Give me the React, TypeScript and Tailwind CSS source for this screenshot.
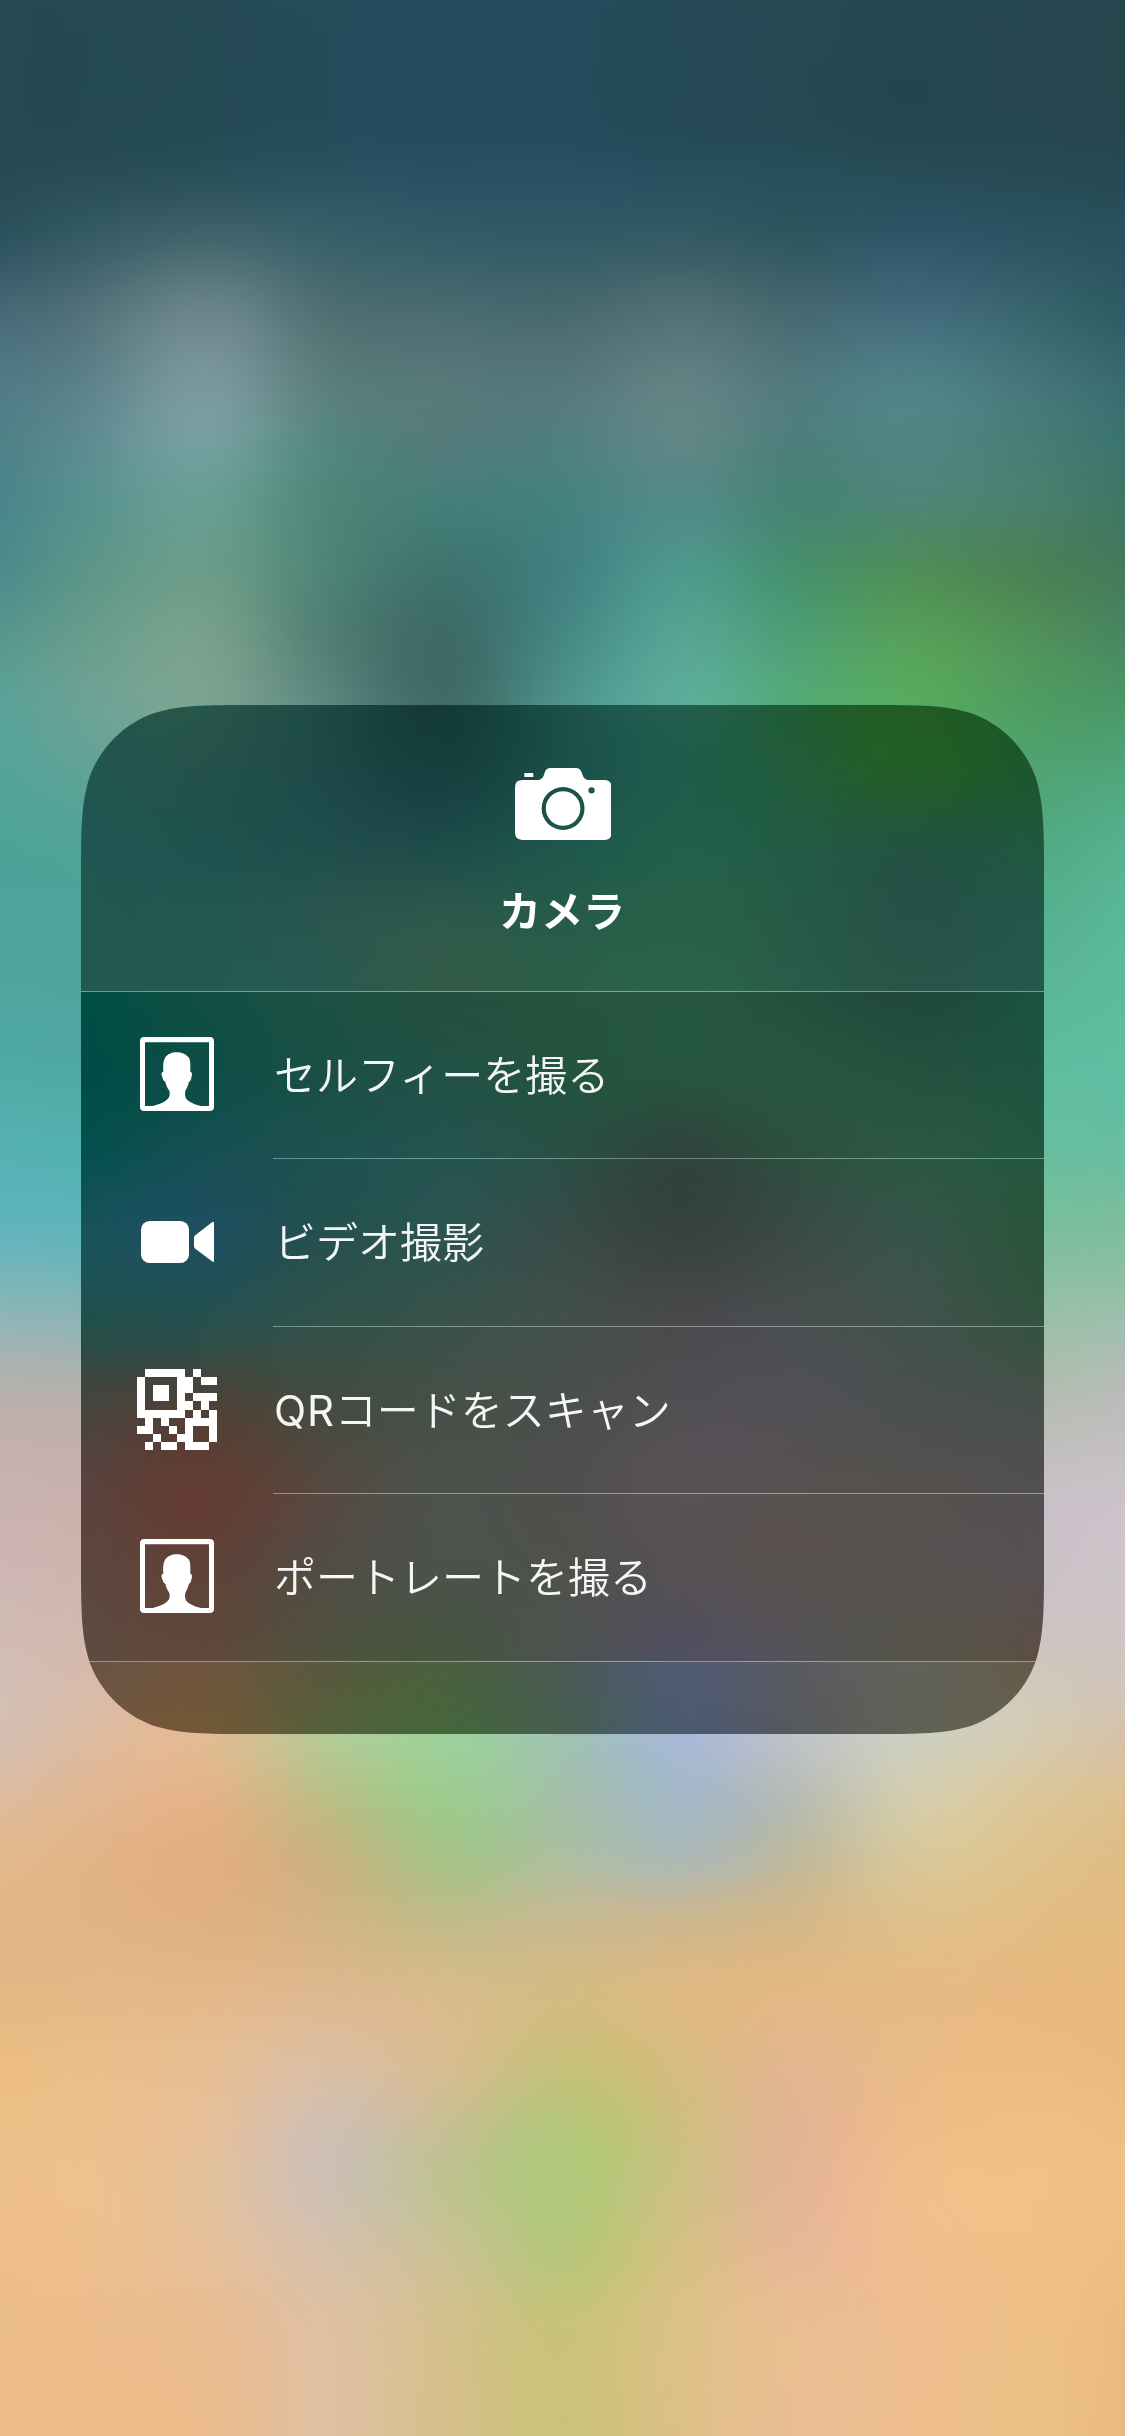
import type { ReactNode } from 'react'

type MeshRow = { y: number; colors: string }
type Mesh = { xs: number[]; rows: MeshRow[] }

const WALLPAPER: Mesh = {
  xs: [0, 76, 207, 325, 445, 562, 682, 792, 912, 1040, 1125],
  rows: [
    { y: 0, colors: '264852 244952 254a54 264c5c 264c5e 264c5e 254a56 264953 24464f 264750 26464e' },
    { y: 130, colors: '264852 244952 254b55 264c5c 264c5e 264c5e 254a57 254a54 24474f 264750 26464f' },
    { y: 180, colors: '284c55 294e57 2b515b 2d5362 2b5264 2a5265 2a5160 28505c 284e59 274c56 264a54' },
    { y: 240, colors: '2c525e 355b64 43666d 39616a 345c67 315b66 355b65 30575f 30576a 2c5462 2a525d' },
    { y: 310, colors: '456a76 506f78 6b868b 4f6f72 4a6c71 47696e 527074 456970 436a7c 38646c 2f5b63' },
    { y: 390, colors: '517b87 5a8289 7b9a9f 5c7f7f 587a7b 56797c 638385 527b7f 518488 46767a 396c70' },
    { y: 440, colors: '4f8087 5c8a8f 77a0a1 54877f 557b7b 517f82 618786 4e7f7c 508584 487b75 3a736f' },
    { y: 500, colors: '49858a 56908e 699e94 4e8679 467f7a 45827f 538a89 478374 4e8578 4a7f6d 3e7564' },
    { y: 570, colors: '4b8b8c 5b9489 6c9c89 4f8477 3f736e 418180 4f998d 46916f 4f8e58 4b8055 457a5c' },
    { y: 640, colors: '57988f 669c8d 78a18d 527f74 3f6a66 468884 58a594 4f9f76 57a15b 50915b 488762' },
    { y: 705, colors: '59a299 6ba296 7ba392 5c8880 426b67 4f938a 5dad9b 54aa78 57ab5f 4f9c63 4b9768' },
    { y: 850, colors: '4ea398 50a398 5aa095 5a9a90 5a9a90 5a9a90 5aa590 55aa80 55ad75 52ab85 57b290' },
    { y: 1050, colors: '50a8a4 50a7a2 50a7a0 50a7a0 50a7a0 50a7a0 50a7a0 58b298 5cb89a 60bb9e 60bda0' },
    { y: 1130, colors: '55b0b0 54afae 53aeae 53aeae 53aeae 53aeae 53aeae 60b89c 60b89c 65bea0 65bda2' },
    { y: 1230, colors: '62b4bd 60b4bb 5cb0bd 5cb0bd 5cb0bd 5cb0bd 70b0a0 78b89c 78b89c 7bbf9c 7fbd9f' },
    { y: 1330, colors: '97b5b5 94b4b4 90b0b0 90b0b0 90b0b0 90b0b0 95b5a5 9ab8a8 9abaaa 9dc0a8 a3beb0' },
    { y: 1400, colors: 'bab0ad b9b0ac b8aeaa b8aeaa b8aeaa b8aeaa b8b0b0 b5b8b0 b5b8b0 b5bdb2 bbbcba' },
    { y: 1500, colors: 'c9b3b0 cab2ad cbaea8 cbaea8 cbaea8 cbaea8 c8b5b8 c8c0c4 c8c0c4 c9c1c7 cbc3c9' },
    { y: 1600, colors: 'cfb9b4 d0b7b0 d0b5ad d0b5ad c0c0b0 c0c0b8 bcc0d0 c8c0c4 cac3c4 cbc3c5 ccc4c7' },
    { y: 1700, colors: 'd3bfb4 d8bcaa dfb99a b8c8a0 a5d0a0 a5c4b8 aabad8 c0c2cb cccdc4 d2cab8 d2c3b6' },
    { y: 1740, colors: 'd4beb2 dcbba2 e2bb92 b5ca98 9fd19b a0c2b2 a8b9d6 bfc2c8 cdcfc0 d5cab0 d6c1a7' },
    { y: 1800, colors: 'dfbb9d e0b894 e4b387 bcbd85 9dcb8e a5c0a8 a4b8c6 b6bbb2 d4cdac dcc597 dcc090' },
    { y: 1860, colors: 'e2b98c e2b587 e2ae80 cbb282 a7c388 adbf9e adb9b6 bfb99c d9c79a dfc18b dfbc84' },
    { y: 1920, colors: 'e2b787 e2b585 e0b182 d3b484 c1bb88 c8b992 ccb78f d5b788 dec08b e2bd83 e1ba80' },
    { y: 1990, colors: 'e4b884 e4b886 e4b889 ddb88f d8bb8b d3bc83 dfb982 e2b884 e6ba84 e8b981 e7b87e' },
    { y: 2060, colors: 'ebbd84 ebbe88 e5be93 dcbea2 d9bc90 c9c07c d8bb80 e3b68f e9bb86 ecbb81 eab97f' },
    { y: 2130, colors: 'edc089 edc08b e6bf99 cfbfb2 c7bf95 b2c77a cfbf80 e2b494 edbc88 f0bf83 eebd83' },
    { y: 2180, colors: 'eec089 efc18c e3c19c cdbfb5 bfc291 afc97a cdc083 e3b497 f0bf8b f3c087 f0be84' },
    { y: 2260, colors: 'edbe89 eebf8c e7c09a d7c0a8 cdc195 b8c67b d7c083 e7b897 efbe8e f0c087 edbd84' },
    { y: 2320, colors: 'ebbd8a ecbc8b e8bc91 dfc0a3 d4c08d c8c37b dcc187 e9be91 edbd8f eec087 eaba82' },
    { y: 2436, colors: 'ebbc88 ecbc89 ebbb8b e0c0a1 d6bf8a cbc27a debf87 e9be92 edbd8c ecc086 e9b981' },
  ],
}

const PANEL_XS = [0, 119, 239, 359, 479, 599, 709, 829, 963]

const HEADER: Mesh = {
  xs: PANEL_XS,
  rows: [
    { y: 0, colors: '23564b 27564a 1d4a44 143a35 1b4f48 235f4e 1f5b35 225c22 1b5530' },
    { y: 65, colors: '225550 25524b 1d4a48 163f3e 1a4f49 205c4b 205c3a 235e25 1b5630' },
    { y: 145, colors: '205752 1f534f 214f4d 1f4d4a 1f574c 22604b 235b46 245343 205840' },
    { y: 215, colors: '22574f 235752 2a574f 2f594b 275c4a 2a6048 275b47 265247 24574a' },
    { y: 286, colors: '22594f 245a54 285a51 335c49 2d5f49 2d634a 2a5d4a 2a5549 265b4c' },
  ],
}

const LIST: Mesh = {
  xs: PANEL_XS,
  rows: [
    { y: 0, colors: '004f45 124e44 1c5042 24503f 25533f 26563f 24503e 1f483b 1a5340' },
    { y: 83, colors: '004c47 0d4e47 1a4f46 225247 24533f 265540 285640 265240 1f5440' },
    { y: 166, colors: '05514f 174f54 1e5250 265350 2a5046 30433c 2e4f40 2c5742 245640' },
    { y: 238, colors: '19535a 1e4f60 24504f 2b5450 384c48 36423f 3a4a46 37554a 285439' },
    { y: 334, colors: '22504a 28504e 32524a 3a524a 43504b 4b4a4d 4a4f50 42524c 345240' },
    { y: 408, colors: '45453f 4d4238 444b40 455048 4a4f4b 514f53 515055 4b5050 47504a' },
    { y: 501, colors: '5a4440 643c32 574941 4d524c 504f4d 595257 575150 55514d 524f52' },
    { y: 568, colors: '5c473e 5f4238 534c44 4c524c 4f514c 565053 58514e 575250 555053' },
    { y: 669, colors: '5e4c42 60493a 4f523f 46553d 4d5350 504f62 54525a 555449 5e4e43' },
  ],
}

const FOOTER: Mesh = {
  xs: PANEL_XS,
  rows: [
    { y: 0, colors: '665446 6f553f 5a583f 4d603f 4b5a55 505b73 5a5b62 61625a 655a48' },
    { y: 72, colors: '6f5640 735935 56603a 45663b 46604f 4b5a70 55595d 606157 655f4c' },
  ],
}

// Layers bleed past their box so the blur never pulls in an empty edge
const BLEED = 60
const STEPS = 4

function toRgb(hex: string) {
  return [0, 2, 4].map((i) => parseInt(hex.slice(i, i + 2), 16))
}

// Hermite curve through the points, sampled STEPS times between each pair
function smooth(at: number[], values: number[][]) {
  const last = at.length - 1
  const slope = (i: number, k: number) => {
    const a = Math.max(i - 1, 0)
    const b = Math.min(i + 1, last)
    return (values[b][k] - values[a][k]) / (at[b] - at[a])
  }
  const outAt: number[] = []
  const outValues: number[][] = []
  for (let i = 0; i < last; i++) {
    const span = at[i + 1] - at[i]
    for (let s = 0; s < STEPS; s++) {
      const t = s / STEPS
      const t2 = t * t
      const t3 = t2 * t
      outAt.push(Math.round(at[i] + span * t))
      outValues.push(
        values[i].map(
          (v, k) =>
            (2 * t3 - 3 * t2 + 1) * v +
            (t3 - 2 * t2 + t) * span * slope(i, k) +
            (3 * t2 - 2 * t3) * values[i + 1][k] +
            (t3 - t2) * span * slope(i + 1, k)
        )
      )
    }
  }
  outAt.push(at[last])
  outValues.push(values[last])
  return { at: outAt, values: outValues }
}

function buildLayers(mesh: Mesh) {
  let xs: number[] = []
  const flatRows = mesh.rows.map((row) => {
    const line = smooth(mesh.xs, row.colors.split(' ').map(toRgb))
    xs = line.at
    return line.values.flat()
  })
  const grid = smooth(mesh.rows.map((row) => row.y), flatRows)
  const end = grid.at[grid.at.length - 1] + BLEED * 2

  return grid.at.map((y, i) => {
    const top = i > 0 ? grid.at[i - 1] + BLEED : 0
    const bottom = i < grid.at.length - 1 ? grid.at[i + 1] + BLEED : end
    const stops = xs.map((x, c) => {
      const [r, g, b] = grid.values[i].slice(c * 3, c * 3 + 3)
      return `rgb(${r.toFixed(1)} ${g.toFixed(1)} ${b.toFixed(1)}) ${x + BLEED}px`
    })
    return {
      top,
      height: bottom - top,
      backgroundImage: `linear-gradient(to right, ${stops.join(', ')})`,
      maskImage: i > 0 ? `linear-gradient(to bottom, transparent, #000 ${y + BLEED - top}px)` : undefined,
    }
  })
}

function MeshGradient({ mesh }: { mesh: Mesh }) {
  return (
    <div className="pointer-events-none absolute -inset-[60px] blur-[12px]">
      {buildLayers(mesh).map((layer) => (
        <div key={`${layer.top}-${layer.height}`} className="absolute inset-x-0" style={layer} />
      ))}
    </div>
  )
}

// Continuous ("squircle") corner outline
function squircle(w: number, h: number, r: number) {
  const a = 1.528665 * r
  const b = 1.088493 * r
  const c = 0.868407 * r
  const d = 0.631494 * r
  const e = 0.372824 * r
  const f = 0.16906 * r
  const g = 0.074911 * r
  return [
    `M${a} 0 H${w - a}`,
    `C${w - b} 0 ${w - c} 0 ${w - d} ${g}`,
    `C${w - e} ${f} ${w - f} ${e} ${w - g} ${d}`,
    `C${w} ${c} ${w} ${b} ${w} ${a}`,
    `V${h - a}`,
    `C${w} ${h - b} ${w} ${h - c} ${w - g} ${h - d}`,
    `C${w - f} ${h - e} ${w - e} ${h - f} ${w - d} ${h - g}`,
    `C${w - c} ${h} ${w - b} ${h} ${w - a} ${h}`,
    `H${a}`,
    `C${b} ${h} ${c} ${h} ${d} ${h - g}`,
    `C${e} ${h - f} ${f} ${h - e} ${g} ${h - d}`,
    `C0 ${h - c} 0 ${h - b} 0 ${h - a}`,
    `V${a}`,
    `C0 ${b} 0 ${c} ${g} ${d}`,
    `C${f} ${e} ${e} ${f} ${d} ${g}`,
    `C${c} 0 ${b} 0 ${a} 0 Z`,
  ].join(' ')
}

function CameraIcon() {
  return (
    <svg className="ml-px h-[72px] w-[96.5px]" viewBox="0 0 290 216" fill="#fff">
      <rect x="28" y="15" width="27" height="12" rx="2" />
      <path
        fillRule="evenodd"
        d="M22 36H66C78 36 84 30 87 21C91 7 94 0 108 0H181C195 0 199 7 203 21C206 30 212 36 224 36H268Q290 36 290 58V194Q290 216 268 216H22Q0 216 0 194V58Q0 36 22 36ZM144.500 57a64.500 64.500 0 1 0 0 129a64.500 64.500 0 1 0 0-129ZM230 57.500a9.500 9.500 0 1 0 0 19a9.500 9.500 0 1 0 0-19Z"
      />
      <circle cx="144.500" cy="121.500" r="52" />
    </svg>
  )
}

function PortraitIcon() {
  return (
    <svg className="mb-[3px] h-[74px] w-[74px]" viewBox="0 0 222 222" fill="#fff">
      <path
        fillRule="evenodd"
        d="M13 0H209Q222 0 222 13V209Q222 222 209 222H13Q0 222 0 209V13Q0 0 13 0ZM15 16V207H207V16Z"
      />
      <path d="M111 46C128 46 138 53 147 62C152 70 151 88 151 104C156 105 157 110 155 118C153 128 152 133 147 134C144 146 140 155 136 161C134 172 135 182 142 189C154 199 174 206 190 208H32C50 206 72 197 82 187C90 180 90 171 88 161C82 153 78 144 76 134C70 133 69 127 66 118C63 110 64 105 70 104C69 88 69 72 76 61C83 52 94 46 111 46Z" />
    </svg>
  )
}

function VideoIcon() {
  return (
    <svg className="mb-px ml-px h-[42px] w-[73px]" viewBox="0 0 219 126" fill="#fff">
      <rect width="144" height="126" rx="26" />
      <path d="M159 50Q159 46 163 43L213 4Q219 0 219 7V119Q219 126 213 121L163 83Q159 80 159 76Z" />
    </svg>
  )
}

const QR_ROWS = [
  '.#####.#..',
  '#....##.##',
  '#.##.##...',
  '#.##.#.###',
  '#....##.#.',
  '######.#.#',
  '.#.#..####',
  '##..#.#..#',
  '..#..##..#',
  '.#.##.###.',
]

function QrIcon() {
  return (
    <svg className="mb-[2px] h-[81px] w-[80px]" viewBox="0 0 10 10" preserveAspectRatio="none" fill="#fff" shapeRendering="crispEdges">
      {QR_ROWS.map((row, y) =>
        row.split('').map((cell, x) => cell === '#' && <rect key={`${x}-${y}`} x={x} y={y} width="1" height="1" />)
      )}
    </svg>
  )
}

function Separator() {
  return (
    <div className="relative w-full shrink-0 bg-white/14">
      <div className="h-px bg-[#505050] mix-blend-color-dodge" />
    </div>
  )
}

function ActionRow({ icon, label, last = false }: { icon: ReactNode; label: ReactNode; last?: boolean }) {
  return (
    <li className="relative flex h-[167px] flex-col even:h-[168px]">
      <button type="button" className="flex flex-1 items-center text-left">
        <span className="flex w-[192px] justify-center">{icon}</span>
        <span className="pt-px pl-px text-[42px] leading-none font-[350] whitespace-nowrap text-white/95">{label}</span>
      </button>
      <div className={last ? '' : 'pl-[192px]'}>
        <Separator />
      </div>
    </li>
  )
}

export default function App() {
  return (
    <main className="relative flex h-[2436px] w-[1125px] justify-center overflow-hidden pt-[705px] font-[Inter,'Noto_Sans_CJK_JP',sans-serif]">
      <MeshGradient mesh={WALLPAPER} />

      <section
        className="relative flex h-[1029px] w-[963px] flex-col"
        style={{ clipPath: `path('${squircle(963, 1029, 114)}')` }}
      >
        {/* Título */}
        <header className="relative h-[287px] overflow-hidden">
          <MeshGradient mesh={HEADER} />
          <div className="relative flex h-[286px] flex-col items-center pt-[63px]">
            <CameraIcon />
            <h1 className="mt-[50px] pr-px text-[42px] leading-[44px] font-bold text-white">カメラ</h1>
          </div>
          <Separator />
        </header>

        {/* Acciones. El fondo va fuera de la lista para no alterar even: */}
        <div className="relative overflow-hidden">
          <MeshGradient mesh={LIST} />
          <ul>
            <ActionRow icon={<PortraitIcon />} label="セルフィーを撮る" />
            <ActionRow icon={<VideoIcon />} label="ビデオ撮影" />
            <ActionRow
              icon={<QrIcon />}
              label={
                <>
                  <span className="font-normal tracking-[0.8px]">QR</span>コードをスキャン
                </>
              }
            />
            <ActionRow icon={<PortraitIcon />} label="ポートレートを撮る" last />
          </ul>
        </div>

        <footer className="relative h-[72px] overflow-hidden">
          <MeshGradient mesh={FOOTER} />
        </footer>
      </section>
    </main>
  )
}
